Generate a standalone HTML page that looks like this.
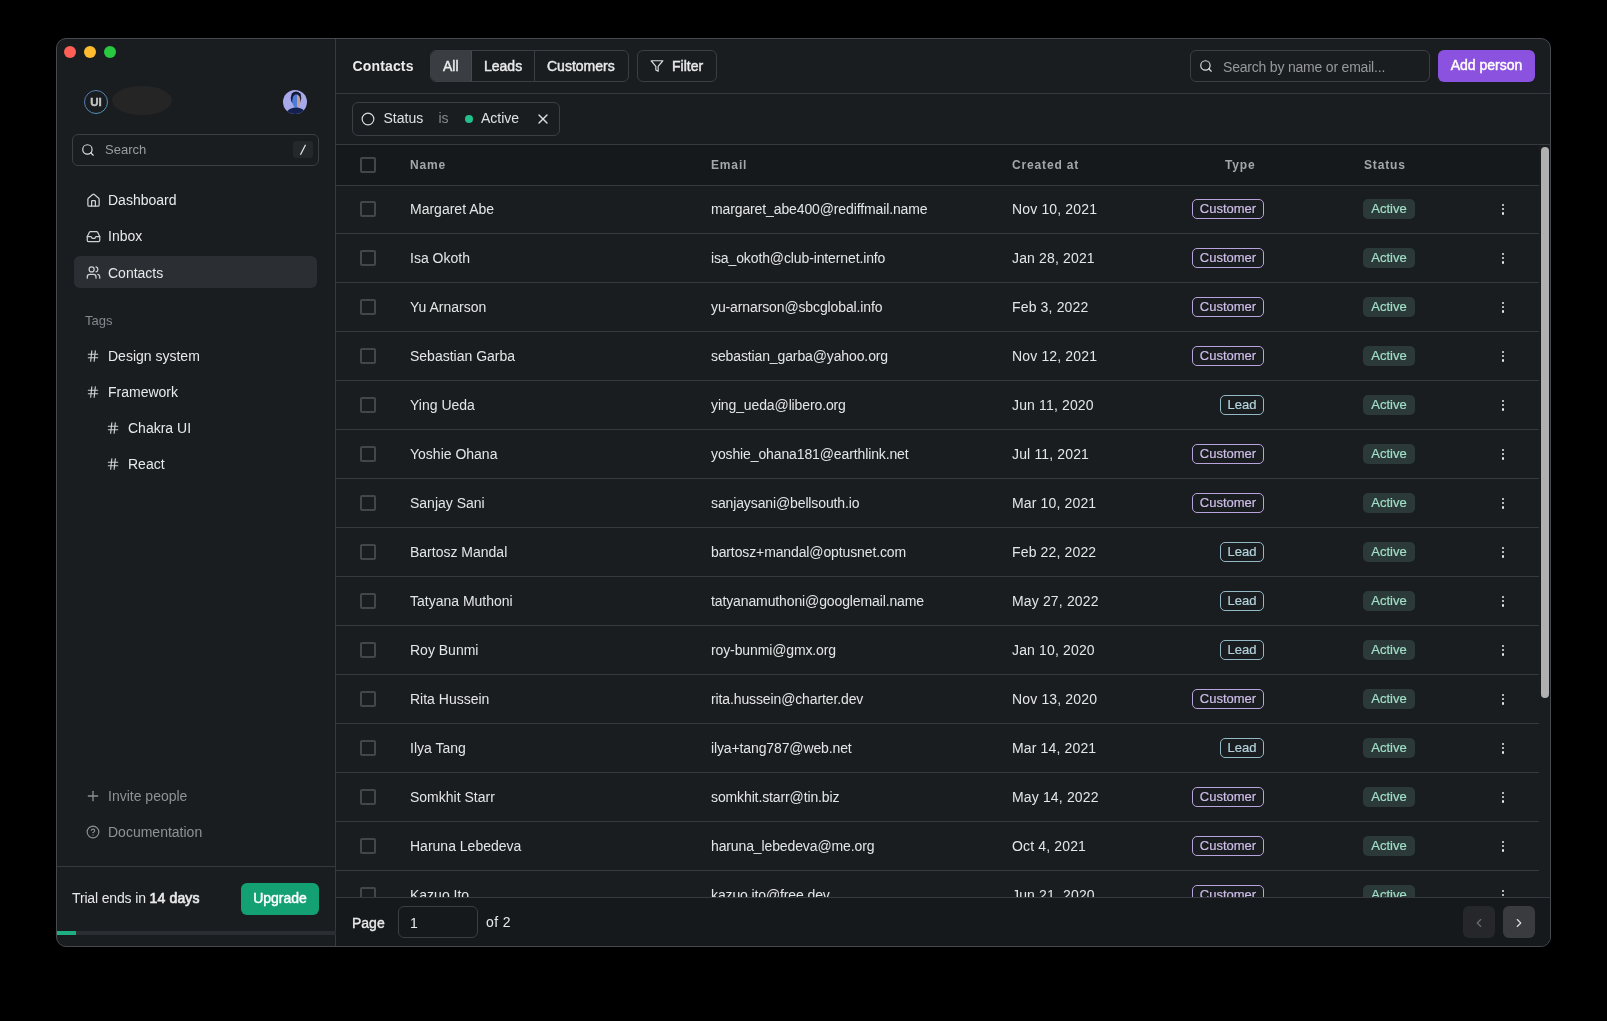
<!DOCTYPE html>
<html><head><meta charset="utf-8">
<style>
*{box-sizing:border-box;margin:0;padding:0}
html,body{width:1607px;height:1021px;background:#000;overflow:hidden;font-family:"Liberation Sans",sans-serif;color:#e8e9ea}
.abs{position:absolute}
#win{will-change:transform;position:absolute;left:56px;top:38px;width:1495px;height:909px;border:1px solid #46494d;border-radius:10px;background:#1a1d20;overflow:hidden}
.tl{position:absolute;top:7px;width:12px;height:12px;border-radius:50%}
#side{position:absolute;left:0;top:0;width:279px;height:907px;border-right:1px solid #36393d}
.t{position:absolute;white-space:nowrap;line-height:20px}
.nav{position:absolute;left:17px;width:243px;height:32px;border-radius:6px}
.nav.on{background:#2b2e32}
.nav .t{left:34px;top:7px;font-size:14px;color:#e8e9ea}
.nav svg{position:absolute;left:11px;top:9px}
#main{position:absolute;left:279px;top:0;width:1214px;height:907px}
.hline{position:absolute;left:0;height:1px;background:#36393d}
.btn{position:absolute;height:32px;line-height:30px;font-size:14px;text-align:center;-webkit-text-stroke:0.45px #fff}
.sb{-webkit-text-stroke:0.45px #e8e9ea}
.row{position:absolute;left:0;width:1203px;height:49px;border-bottom:1px solid #36393d}
.cb{position:absolute;left:24px;top:16px;width:16px;height:16px;border:2px solid #444649;border-radius:2px}
.row .t{font-size:14px;top:14px;color:#e4e5e6}
.badge{position:absolute;height:20px;line-height:18px;font-size:13px;border-radius:5px;padding:0 8px;top:14px;-webkit-text-stroke:0.2px currentColor}
.cust{border:1px solid #b9a3dc;color:#cdbde8;left:856px;width:72px;text-align:center;padding:0}
.lead{border:1px solid #93b9c6;color:#b4d3dd;left:884px;width:44px;text-align:center;padding:0}
.act{background:#2b3a38;color:#a2dfc9;left:1027px;width:52px;text-align:center;padding:0;line-height:20px}
.dots{position:absolute;left:1166px;top:19.2px;width:3px;height:11px}
.dots i{position:absolute;left:0;width:2.2px;height:2.2px;border-radius:50%;background:#e8e9ea}
</style></head><body>
<div id="win">
  <div class="tl" style="left:7px;background:#ff5f57"></div>
  <div class="tl" style="left:27px;background:#febc2e"></div>
  <div class="tl" style="left:47px;background:#28c840"></div>

  <div id="side">
    <!-- logo -->
    <svg class="abs" style="left:27px;top:51px" width="24" height="24" viewBox="0 0 24 24">
      <defs><linearGradient id="lg" x1="0" y1="0" x2="1" y2="1"><stop offset="0" stop-color="#5a7cc8"/><stop offset="0.5" stop-color="#5a90c0"/><stop offset="1" stop-color="#4fa8bf"/></linearGradient></defs>
      <circle cx="12" cy="12" r="11.5" fill="#1a1d20" stroke="url(#lg)" stroke-width="0.9"/>
    </svg>
    <div class="t" style="left:27px;top:51px;width:24px;height:24px;line-height:24px;text-align:center;font-weight:bold;font-size:11.5px;color:#c4c5c6;letter-spacing:0px;-webkit-text-stroke:0.4px #c4c5c6">UI</div>
    <div class="abs" style="left:54.5px;top:46.8px;width:60.3px;height:29px;border-radius:50%;background:#252526;filter:blur(0.6px)"></div>
    <!-- avatar -->
    <svg class="abs" style="left:226px;top:51px" width="24" height="24" viewBox="0 0 24 24">
      <defs><clipPath id="av"><circle cx="12" cy="12" r="12"/></clipPath></defs>
      <g clip-path="url(#av)">
        <rect width="24" height="24" fill="#a7aaea"/>
        <ellipse cx="13" cy="8" rx="5.3" ry="6.6" fill="#171b36"/>
        <defs><clipPath id="fc"><ellipse cx="13.3" cy="10.8" rx="4.1" ry="6.6"/></clipPath></defs>
        <g clip-path="url(#fc)"><rect x="8" y="3" width="6" height="16" fill="#4a7ddb"/><rect x="14" y="3" width="6" height="16" fill="#c99c90"/></g>
        <path d="M9 5.5 C10 3.5 16 3 17.6 6.5 L17.6 4 C16 1.5 10 1.5 9 4 Z" fill="#171b36"/>
        <path d="M2 25 C4 20 8 17.6 13 17.6 C18 17.6 22 20 24 25 Z" fill="#12214f"/>
      </g>
    </svg>
    <!-- search -->
    <div class="abs" style="left:15px;top:95px;width:247px;height:32px;border:1px solid #3b3e42;border-radius:6px">
      <svg class="abs" style="left:8px;top:7.9px" width="14" height="14" viewBox="0 0 24 24" fill="none" stroke="#dcdddf" stroke-width="2" stroke-linecap="round" stroke-linejoin="round"><circle cx="11" cy="11" r="8"/><path d="m21 21-4.3-4.3"/></svg>
      <div class="t" style="left:32px;top:5px;font-size:13px;color:#9a9c9f">Search</div>
      <div class="abs" style="left:219.5px;top:6px;width:20.5px;height:17px;border-radius:3px;background:#25282b"><svg class="abs" style="left:6.5px;top:3px" width="8" height="12" viewBox="0 0 8 12"><path d="M6.3 1.3L1.7 10.3" stroke="#dcdddf" stroke-width="1.3" stroke-linecap="round"/></svg></div>
    </div>
    <!-- nav -->
    <div class="nav" style="top:144px">
      <svg class="abs" style="left:11.7px;top:9.9px" width="15" height="15" viewBox="0 0 24 24" fill="none" stroke="#cfd0d2" stroke-width="2" stroke-linecap="round" stroke-linejoin="round"><path d="M15 21v-8a1 1 0 0 0-1-1h-4a1 1 0 0 0-1 1v8"/><path d="M3 10a2 2 0 0 1 .709-1.528l7-5.999a2 2 0 0 1 2.582 0l7 5.999A2 2 0 0 1 21 10v9a2 2 0 0 1-2 2H5a2 2 0 0 1-2-2z"/></svg>
      <div class="t">Dashboard</div></div>
    <div class="nav" style="top:180px">
      <svg class="abs" style="left:11.5px;top:9.7px" width="15" height="15" viewBox="0 0 24 24" fill="none" stroke="#cfd0d2" stroke-width="2" stroke-linecap="round" stroke-linejoin="round"><polyline points="22 12 16 12 14 15 10 15 8 12 2 12"/><path d="M5.45 5.11 2 12v6a2 2 0 0 0 2 2h16a2 2 0 0 0 2-2v-6l-3.45-6.89A2 2 0 0 0 16.76 4H7.24a2 2 0 0 0-1.79 1.11z"/></svg>
      <div class="t">Inbox</div></div>
    <div class="nav on" style="top:217px">
      <svg class="abs" style="left:11.5px;top:8.5px" width="15" height="15" viewBox="0 0 24 24" fill="none" stroke="#cfd0d2" stroke-width="2" stroke-linecap="round" stroke-linejoin="round"><path d="M16 21v-2a4 4 0 0 0-4-4H6a4 4 0 0 0-4 4v2"/><circle cx="9" cy="7" r="4"/><path d="M22 21v-2a4 4 0 0 0-3-3.87"/><path d="M16 3.13a4 4 0 0 1 0 7.75"/></svg>
      <div class="t">Contacts</div></div>
    <div class="t" style="left:28px;top:272px;font-size:13px;color:#85888c">Tags</div>
    <div class="nav" style="top:300px">
      <svg class="abs" style="left:12px;top:10.2px" width="14" height="14" viewBox="0 0 24 24" fill="none" stroke="#cfd0d2" stroke-width="2" stroke-linecap="round" stroke-linejoin="round"><line x1="4" x2="20" y1="9" y2="9"/><line x1="4" x2="20" y1="15" y2="15"/><line x1="10" x2="8" y1="3" y2="21"/><line x1="16" x2="14" y1="3" y2="21"/></svg>
      <div class="t">Design system</div></div>
    <div class="nav" style="top:336px">
      <svg class="abs" style="left:12px;top:10.2px" width="14" height="14" viewBox="0 0 24 24" fill="none" stroke="#cfd0d2" stroke-width="2" stroke-linecap="round" stroke-linejoin="round"><line x1="4" x2="20" y1="9" y2="9"/><line x1="4" x2="20" y1="15" y2="15"/><line x1="10" x2="8" y1="3" y2="21"/><line x1="16" x2="14" y1="3" y2="21"/></svg>
      <div class="t">Framework</div></div>
    <div class="nav" style="top:372px">
      <svg class="abs" style="left:32px;top:10.2px" width="14" height="14" viewBox="0 0 24 24" fill="none" stroke="#cfd0d2" stroke-width="2" stroke-linecap="round" stroke-linejoin="round"><line x1="4" x2="20" y1="9" y2="9"/><line x1="4" x2="20" y1="15" y2="15"/><line x1="10" x2="8" y1="3" y2="21"/><line x1="16" x2="14" y1="3" y2="21"/></svg>
      <div class="t" style="left:54px">Chakra UI</div></div>
    <div class="nav" style="top:408px">
      <svg class="abs" style="left:32px;top:10.2px" width="14" height="14" viewBox="0 0 24 24" fill="none" stroke="#cfd0d2" stroke-width="2" stroke-linecap="round" stroke-linejoin="round"><line x1="4" x2="20" y1="9" y2="9"/><line x1="4" x2="20" y1="15" y2="15"/><line x1="10" x2="8" y1="3" y2="21"/><line x1="16" x2="14" y1="3" y2="21"/></svg>
      <div class="t" style="left:54px">React</div></div>

    <div class="nav" style="top:740px">
      <svg class="abs" style="left:11px;top:9px" width="16" height="16" viewBox="0 0 24 24" fill="none" stroke="#8d9093" stroke-width="2" stroke-linecap="round" stroke-linejoin="round"><path d="M5 12h14"/><path d="M12 5v14"/></svg>
      <div class="t" style="color:#8f9295">Invite people</div></div>
    <div class="nav" style="top:776px">
      <svg class="abs" style="left:11.9px;top:10px" width="14" height="14" viewBox="0 0 24 24" fill="none" stroke="#8d9093" stroke-width="2" stroke-linecap="round" stroke-linejoin="round"><circle cx="12" cy="12" r="10"/><path d="M9.09 9a3 3 0 0 1 5.83 1c0 2-3 3-3 3"/><path d="M12 17h.01"/></svg>
      <div class="t" style="color:#8f9295">Documentation</div></div>

    <div class="hline" style="top:827px;width:279px"></div>
    <div class="t" style="left:15px;top:849px;font-size:14px;color:#e8e9ea;letter-spacing:-0.15px">Trial ends in <span style="letter-spacing:0.15px;-webkit-text-stroke:0.65px #e8e9ea">14 days</span></div>
    <div class="btn" style="left:184px;top:844px;width:78px;height:32px;line-height:31px;border-radius:6px;background:#13a073;color:#fff">Upgrade</div>
    <div class="abs" style="left:0;top:892px;width:279px;height:4px;background:#2a2d31"></div>
    <div class="abs" style="left:-1px;top:892px;width:20px;height:4px;background:#1fae82"></div>
  </div>

  <div id="main">
    <div class="t" style="left:16.5px;top:17px;font-size:14px;font-weight:bold;color:#ececed;letter-spacing:0.15px">Contacts</div>
    <div class="abs" style="left:94px;top:11px;width:199px;height:32px;border:1px solid #3b3e42;border-radius:6px;overflow:hidden">
      <div class="abs" style="left:0;top:0;width:41px;height:30px;background:#3a3d41;border-right:1px solid #46494d"></div>
      <div class="t" style="left:12px;top:5px;font-size:14px;-webkit-text-stroke:0.45px #e8e9ea">All</div>
      <div class="abs" style="left:103px;top:0;width:1px;height:30px;background:#3b3e42"></div>
      <div class="t" style="left:53px;top:5px;font-size:14px;-webkit-text-stroke:0.45px #e8e9ea">Leads</div>
      <div class="t" style="left:116px;top:5px;font-size:14px;-webkit-text-stroke:0.45px #e8e9ea">Customers</div>
    </div>
    <div class="abs" style="left:301px;top:11px;width:80px;height:32px;border:1px solid #3b3e42;border-radius:6px">
      <svg class="abs" style="left:12.3px;top:7.75px" width="14" height="14" viewBox="0 0 24 24" fill="none" stroke="#dcdddf" stroke-width="2" stroke-linecap="round" stroke-linejoin="round"><polygon points="22 3 2 3 10 12.46 10 19 14 21 14 12.46 22 3"/></svg>
      <div class="t" style="left:34px;top:5px;font-size:14px;-webkit-text-stroke:0.45px #e8e9ea">Filter</div>
    </div>
    <div class="abs" style="left:854px;top:11px;width:240px;height:32px;border:1px solid #3b3e42;border-radius:6px">
      <svg class="abs" style="left:8px;top:7.9px" width="14" height="14" viewBox="0 0 24 24" fill="none" stroke="#dcdddf" stroke-width="2" stroke-linecap="round" stroke-linejoin="round"><circle cx="11" cy="11" r="8"/><path d="m21 21-4.3-4.3"/></svg>
      <div class="t" style="left:32px;top:5.5px;font-size:14px;color:#96989b;letter-spacing:-0.2px">Search by name or email...</div>
    </div>
    <div class="btn" style="left:1102px;top:11px;width:97px;border-radius:6px;background:#8a52df;color:#fff;line-height:31px">Add person</div>
    <div class="hline" style="top:54px;width:1214px"></div>

    <!-- filter chip -->
    <div class="abs" style="left:16px;top:63px;width:208px;height:34px;border:1px solid #3b3e42;border-radius:6px">
      <svg class="abs" style="left:8px;top:9px" width="14" height="14" viewBox="0 0 24 24" fill="none" stroke="#dcdddf" stroke-width="2" stroke-linecap="round" stroke-linejoin="round"><circle cx="12" cy="12" r="10"/></svg>
      <div class="t" style="left:30.5px;top:5px;font-size:14px;color:#dfe0e1">Status</div>
      <div class="t" style="left:85.5px;top:5px;font-size:14px;color:#85888c">is</div>
      <div class="abs" style="left:112px;top:12px;width:8px;height:8px;border-radius:50%;background:#22c08a"></div>
      <div class="t" style="left:128px;top:5px;font-size:14px;color:#dfe0e1">Active</div>
      <svg class="abs" style="left:182.1px;top:7.9px" width="16" height="16" viewBox="0 0 24 24" fill="none" stroke="#dcdddf" stroke-width="2" stroke-linecap="round" stroke-linejoin="round"><path d="M18 6 6 18"/><path d="m6 6 12 12"/></svg>
    </div>
    <div class="hline" style="top:105px;width:1214px"></div>

    <!-- table -->
    <div id="table" class="abs" style="left:0;top:106px;width:1214px;height:752px;overflow:hidden">
      <div class="row" style="top:0;height:41px;background:#16191b;z-index:2">
        <div class="cb" style="top:12px"></div>
        <div class="t" style="left:74px;top:10px;font-size:13px;font-weight:bold;color:#a4a6a9;letter-spacing:0.85px;font-size:12px">Name</div>
        <div class="t" style="left:375px;top:10px;font-size:13px;font-weight:bold;color:#a4a6a9;letter-spacing:0.85px;font-size:12px">Email</div>
        <div class="t" style="left:676px;top:10px;font-size:13px;font-weight:bold;color:#a4a6a9;letter-spacing:0.85px;font-size:12px">Created at</div>
        <div class="t" style="left:889px;top:10px;font-size:13px;font-weight:bold;color:#a4a6a9;letter-spacing:0.85px;font-size:12px">Type</div>
        <div class="t" style="left:1028px;top:10px;font-size:13px;font-weight:bold;color:#a4a6a9;letter-spacing:0.85px;font-size:12px">Status</div>
      </div>
      <!--ROWS-->
<div class="row" style="top:40px"><div class="cb"></div><div class="t" style="left:74px">Margaret Abe</div><div class="t" style="left:375px;letter-spacing:-0.12px">margaret_abe400@rediffmail.name</div><div class="t" style="left:676px;letter-spacing:0.15px">Nov 10, 2021</div><div class="badge cust">Customer</div><div class="badge act">Active</div><div class="dots"><i style="top:0"></i><i style="top:4.1px"></i><i style="top:8.2px"></i></div></div>
<div class="row" style="top:89px"><div class="cb"></div><div class="t" style="left:74px">Isa Okoth</div><div class="t" style="left:375px;letter-spacing:-0.12px">isa_okoth@club-internet.info</div><div class="t" style="left:676px;letter-spacing:0.15px">Jan 28, 2021</div><div class="badge cust">Customer</div><div class="badge act">Active</div><div class="dots"><i style="top:0"></i><i style="top:4.1px"></i><i style="top:8.2px"></i></div></div>
<div class="row" style="top:138px"><div class="cb"></div><div class="t" style="left:74px">Yu Arnarson</div><div class="t" style="left:375px;letter-spacing:-0.12px">yu-arnarson@sbcglobal.info</div><div class="t" style="left:676px;letter-spacing:0.15px">Feb 3, 2022</div><div class="badge cust">Customer</div><div class="badge act">Active</div><div class="dots"><i style="top:0"></i><i style="top:4.1px"></i><i style="top:8.2px"></i></div></div>
<div class="row" style="top:187px"><div class="cb"></div><div class="t" style="left:74px">Sebastian Garba</div><div class="t" style="left:375px;letter-spacing:-0.12px">sebastian_garba@yahoo.org</div><div class="t" style="left:676px;letter-spacing:0.15px">Nov 12, 2021</div><div class="badge cust">Customer</div><div class="badge act">Active</div><div class="dots"><i style="top:0"></i><i style="top:4.1px"></i><i style="top:8.2px"></i></div></div>
<div class="row" style="top:236px"><div class="cb"></div><div class="t" style="left:74px">Ying Ueda</div><div class="t" style="left:375px;letter-spacing:-0.12px">ying_ueda@libero.org</div><div class="t" style="left:676px;letter-spacing:0.15px">Jun 11, 2020</div><div class="badge lead">Lead</div><div class="badge act">Active</div><div class="dots"><i style="top:0"></i><i style="top:4.1px"></i><i style="top:8.2px"></i></div></div>
<div class="row" style="top:285px"><div class="cb"></div><div class="t" style="left:74px">Yoshie Ohana</div><div class="t" style="left:375px;letter-spacing:-0.12px">yoshie_ohana181@earthlink.net</div><div class="t" style="left:676px;letter-spacing:0.15px">Jul 11, 2021</div><div class="badge cust">Customer</div><div class="badge act">Active</div><div class="dots"><i style="top:0"></i><i style="top:4.1px"></i><i style="top:8.2px"></i></div></div>
<div class="row" style="top:334px"><div class="cb"></div><div class="t" style="left:74px">Sanjay Sani</div><div class="t" style="left:375px;letter-spacing:-0.12px">sanjaysani@bellsouth.io</div><div class="t" style="left:676px;letter-spacing:0.15px">Mar 10, 2021</div><div class="badge cust">Customer</div><div class="badge act">Active</div><div class="dots"><i style="top:0"></i><i style="top:4.1px"></i><i style="top:8.2px"></i></div></div>
<div class="row" style="top:383px"><div class="cb"></div><div class="t" style="left:74px">Bartosz Mandal</div><div class="t" style="left:375px;letter-spacing:-0.12px">bartosz+mandal@optusnet.com</div><div class="t" style="left:676px;letter-spacing:0.15px">Feb 22, 2022</div><div class="badge lead">Lead</div><div class="badge act">Active</div><div class="dots"><i style="top:0"></i><i style="top:4.1px"></i><i style="top:8.2px"></i></div></div>
<div class="row" style="top:432px"><div class="cb"></div><div class="t" style="left:74px">Tatyana Muthoni</div><div class="t" style="left:375px;letter-spacing:-0.12px">tatyanamuthoni@googlemail.name</div><div class="t" style="left:676px;letter-spacing:0.15px">May 27, 2022</div><div class="badge lead">Lead</div><div class="badge act">Active</div><div class="dots"><i style="top:0"></i><i style="top:4.1px"></i><i style="top:8.2px"></i></div></div>
<div class="row" style="top:481px"><div class="cb"></div><div class="t" style="left:74px">Roy Bunmi</div><div class="t" style="left:375px;letter-spacing:-0.12px">roy-bunmi@gmx.org</div><div class="t" style="left:676px;letter-spacing:0.15px">Jan 10, 2020</div><div class="badge lead">Lead</div><div class="badge act">Active</div><div class="dots"><i style="top:0"></i><i style="top:4.1px"></i><i style="top:8.2px"></i></div></div>
<div class="row" style="top:530px"><div class="cb"></div><div class="t" style="left:74px">Rita Hussein</div><div class="t" style="left:375px;letter-spacing:-0.12px">rita.hussein@charter.dev</div><div class="t" style="left:676px;letter-spacing:0.15px">Nov 13, 2020</div><div class="badge cust">Customer</div><div class="badge act">Active</div><div class="dots"><i style="top:0"></i><i style="top:4.1px"></i><i style="top:8.2px"></i></div></div>
<div class="row" style="top:579px"><div class="cb"></div><div class="t" style="left:74px">Ilya Tang</div><div class="t" style="left:375px;letter-spacing:-0.12px">ilya+tang787@web.net</div><div class="t" style="left:676px;letter-spacing:0.15px">Mar 14, 2021</div><div class="badge lead">Lead</div><div class="badge act">Active</div><div class="dots"><i style="top:0"></i><i style="top:4.1px"></i><i style="top:8.2px"></i></div></div>
<div class="row" style="top:628px"><div class="cb"></div><div class="t" style="left:74px">Somkhit Starr</div><div class="t" style="left:375px;letter-spacing:-0.12px">somkhit.starr@tin.biz</div><div class="t" style="left:676px;letter-spacing:0.15px">May 14, 2022</div><div class="badge cust">Customer</div><div class="badge act">Active</div><div class="dots"><i style="top:0"></i><i style="top:4.1px"></i><i style="top:8.2px"></i></div></div>
<div class="row" style="top:677px"><div class="cb"></div><div class="t" style="left:74px">Haruna Lebedeva</div><div class="t" style="left:375px;letter-spacing:-0.12px">haruna_lebedeva@me.org</div><div class="t" style="left:676px;letter-spacing:0.15px">Oct 4, 2021</div><div class="badge cust">Customer</div><div class="badge act">Active</div><div class="dots"><i style="top:0"></i><i style="top:4.1px"></i><i style="top:8.2px"></i></div></div>
<div class="row" style="top:726px"><div class="cb"></div><div class="t" style="left:74px">Kazuo Ito</div><div class="t" style="left:375px;letter-spacing:-0.12px">kazuo.ito@free.dev</div><div class="t" style="left:676px;letter-spacing:0.15px">Jun 21, 2020</div><div class="badge cust">Customer</div><div class="badge act">Active</div><div class="dots"><i style="top:0"></i><i style="top:4.1px"></i><i style="top:8.2px"></i></div></div>
      <!--/ROWS-->
    </div>
    <div class="abs" style="left:1205px;top:108px;width:8px;height:551px;border-radius:4px;background:#b0b0b0"></div>

    <!-- footer -->
    <div class="abs" style="left:0;top:858px;width:1214px;height:49px;background:#16191b;border-top:1px solid #36393d">
      <div class="t" style="left:16px;top:15px;font-size:14px;color:#e8e9ea;-webkit-text-stroke:0.35px #e8e9ea">Page</div>
      <div class="abs" style="left:62px;top:8px;width:80px;height:32px;border:1px solid #3b3e42;border-radius:6px">
        <div class="t" style="left:11px;top:6px;font-size:14px">1</div>
      </div>
      <div class="t" style="left:150px;top:14px;font-size:14px;letter-spacing:0.4px">of 2</div>
      <div class="abs" style="left:1127px;top:8px;width:32px;height:32px;border-radius:6px;background:#25272a">
        <svg class="abs" style="left:9px;top:9.5px" width="14" height="14" viewBox="0 0 24 24" fill="none" stroke="#6b6e71" stroke-width="2" stroke-linecap="round" stroke-linejoin="round"><path d="m15 18-6-6 6-6"/></svg>
      </div>
      <div class="abs" style="left:1167px;top:8px;width:32px;height:32px;border-radius:6px;background:#393b3e">
        <svg class="abs" style="left:9px;top:9.5px" width="14" height="14" viewBox="0 0 24 24" fill="none" stroke="#dcdddf" stroke-width="2" stroke-linecap="round" stroke-linejoin="round"><path d="m9 18 6-6-6-6"/></svg>
      </div>
    </div>
  </div>
</div>
</body></html>
